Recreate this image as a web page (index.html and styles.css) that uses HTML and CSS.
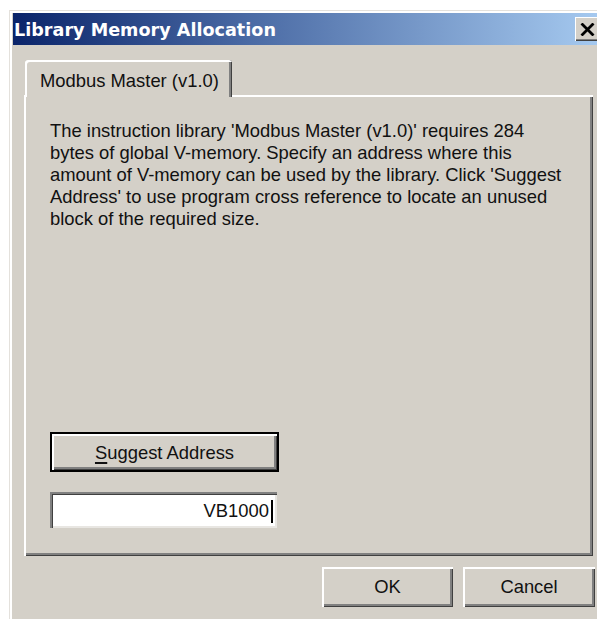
FILE: index.html
```html
<!DOCTYPE html>
<html lang="en">
<head>
<meta charset="utf-8">
<title>Library Memory Allocation</title>
<link rel="stylesheet" href="styles.css">
</head>
<body>
<div class="window">
  <div class="titlebar">
    <span class="title">Library Memory Allocation</span>
    <button class="close" aria-label="Close">
      <svg width="15" height="13" viewBox="0 0 15 13"><path d="M1.5 0.5 L13.5 12.5 M13.5 0.5 L1.5 12.5" stroke="#000" stroke-width="2.8" fill="none"/></svg>
    </button>
  </div>
  <div class="content">
    <div class="tabs">
      <div class="tab">Modbus Master (v1.0)</div>
    </div>
    <div class="panel">
      <p class="message">The instruction library 'Modbus Master (v1.0)' requires 284 bytes of global V-memory. Specify an address where this amount of V-memory can be used by the library. Click 'Suggest Address' to use program cross reference to locate an unused block of the required size.</p>
      <div class="controls">
        <button class="btn btn-default suggest"><u>S</u>uggest Address</button>
        <div class="field"><span class="value">VB1000</span><span class="caret"></span></div>
      </div>
    </div>
    <div class="footer">
      <button class="btn action">OK</button>
      <button class="btn action">Cancel</button>
    </div>
  </div>
</div>
</body>
</html>
```
FILE: styles.css
```css
* { box-sizing: border-box; }

html, body {
  margin: 0;
  height: 100%;
  overflow: hidden;
  background: #fff;
}

body {
  font-family: "Liberation Sans", Arial, sans-serif;
  font-size: 18.4px;
  color: #111;
}

/* dialog frame */
.window {
  margin: 10px 0 0 9px;
  width: 595px;
  height: 609px;
  padding: 3px 3px 0 4px;
  background: #d4d0c8;
  box-shadow: inset 1px 1px #e4e1dc, inset 3px 3px #fff;
}

.titlebar {
  height: 32px;
  display: flex;
  align-items: center;
  justify-content: space-between;
  background: linear-gradient(to right, #0a246a 0%, #4a6aa4 40%, #a6caf0 100%);
}

.title {
  font-family: "DejaVu Sans", Verdana, sans-serif;
  font-weight: bold;
  font-size: 17.6px;
  color: #fff;
  padding: 2px 0 0 1px;
}

.close {
  width: 24px;
  height: 24px;
  margin: 0 2px 0 0;
  padding: 0 0 0 1px;
  border: none;
  background: #d4d0c8;
  display: flex;
  align-items: center;
  justify-content: center;
  box-shadow: inset 1px 1px #fff, inset -1px -1px #404040, inset -2px -2px #808080;
}

.content {
  padding: 15px 0 0 0;
}

/* tab strip */
.tabs {
  display: flex;
  padding-left: 12px;
}

.tab {
  position: relative;
  z-index: 1;
  margin-bottom: -2px;
  height: 37px;
  padding: 10px 13px 0 15px;
  line-height: 22px;
  background: #d4d0c8;
  border-radius: 3px 3px 0 0;
  box-shadow: inset 2px 2px #fff, inset -1px 0 #404040, inset -3px 0 #808080;
}

.panel {
  margin: 0 8px 0 11px;
  height: 461px;
  display: flex;
  flex-direction: column;
  padding: 25px 0 28px 26px;
  box-shadow: inset 2px 2px #fff, inset -1px -1px #404040, inset -3px -3px #808080;
}

.message {
  margin: 0;
  width: 520px;
  line-height: 22px;
}

.controls {
  margin-top: auto;
  display: flex;
  flex-direction: column;
  gap: 20px;
}

/* push buttons */
.btn {
  font: inherit;
  color: #111;
  background: #d4d0c8;
  border: none;
  padding: 0;
  height: 40px;
  box-shadow: inset 2px 2px #fff, inset -1px -1px #404040, inset -3px -3px #808080;
}

.btn-default {
  box-shadow: inset 0 0 0 2px #000, inset 4px 4px #fff, inset -3px -3px #404040, inset -5px -5px #808080;
}

.suggest {
  width: 229px;
  padding-top: 1px;
}

.suggest u {
  text-decoration-thickness: 1.5px;
  text-underline-offset: 3px;
}

/* edit box */
.field {
  width: 227px;
  height: 36px;
  background: #fff;
  display: flex;
  align-items: center;
  justify-content: flex-end;
  padding: 2px 4px 0 0;
  box-shadow: inset 2px 2px #808080, inset 3px 3px #404040, inset -2px -2px #e8e6e2;
}

.caret {
  width: 2px;
  height: 23px;
  margin-left: 2px;
  background: #000;
}

.footer {
  display: flex;
  justify-content: flex-end;
  gap: 10px;
  margin-top: 11px;
  padding-right: 6px;
}

.action { width: 132px; }
.action:first-child { width: 131px; }
```
